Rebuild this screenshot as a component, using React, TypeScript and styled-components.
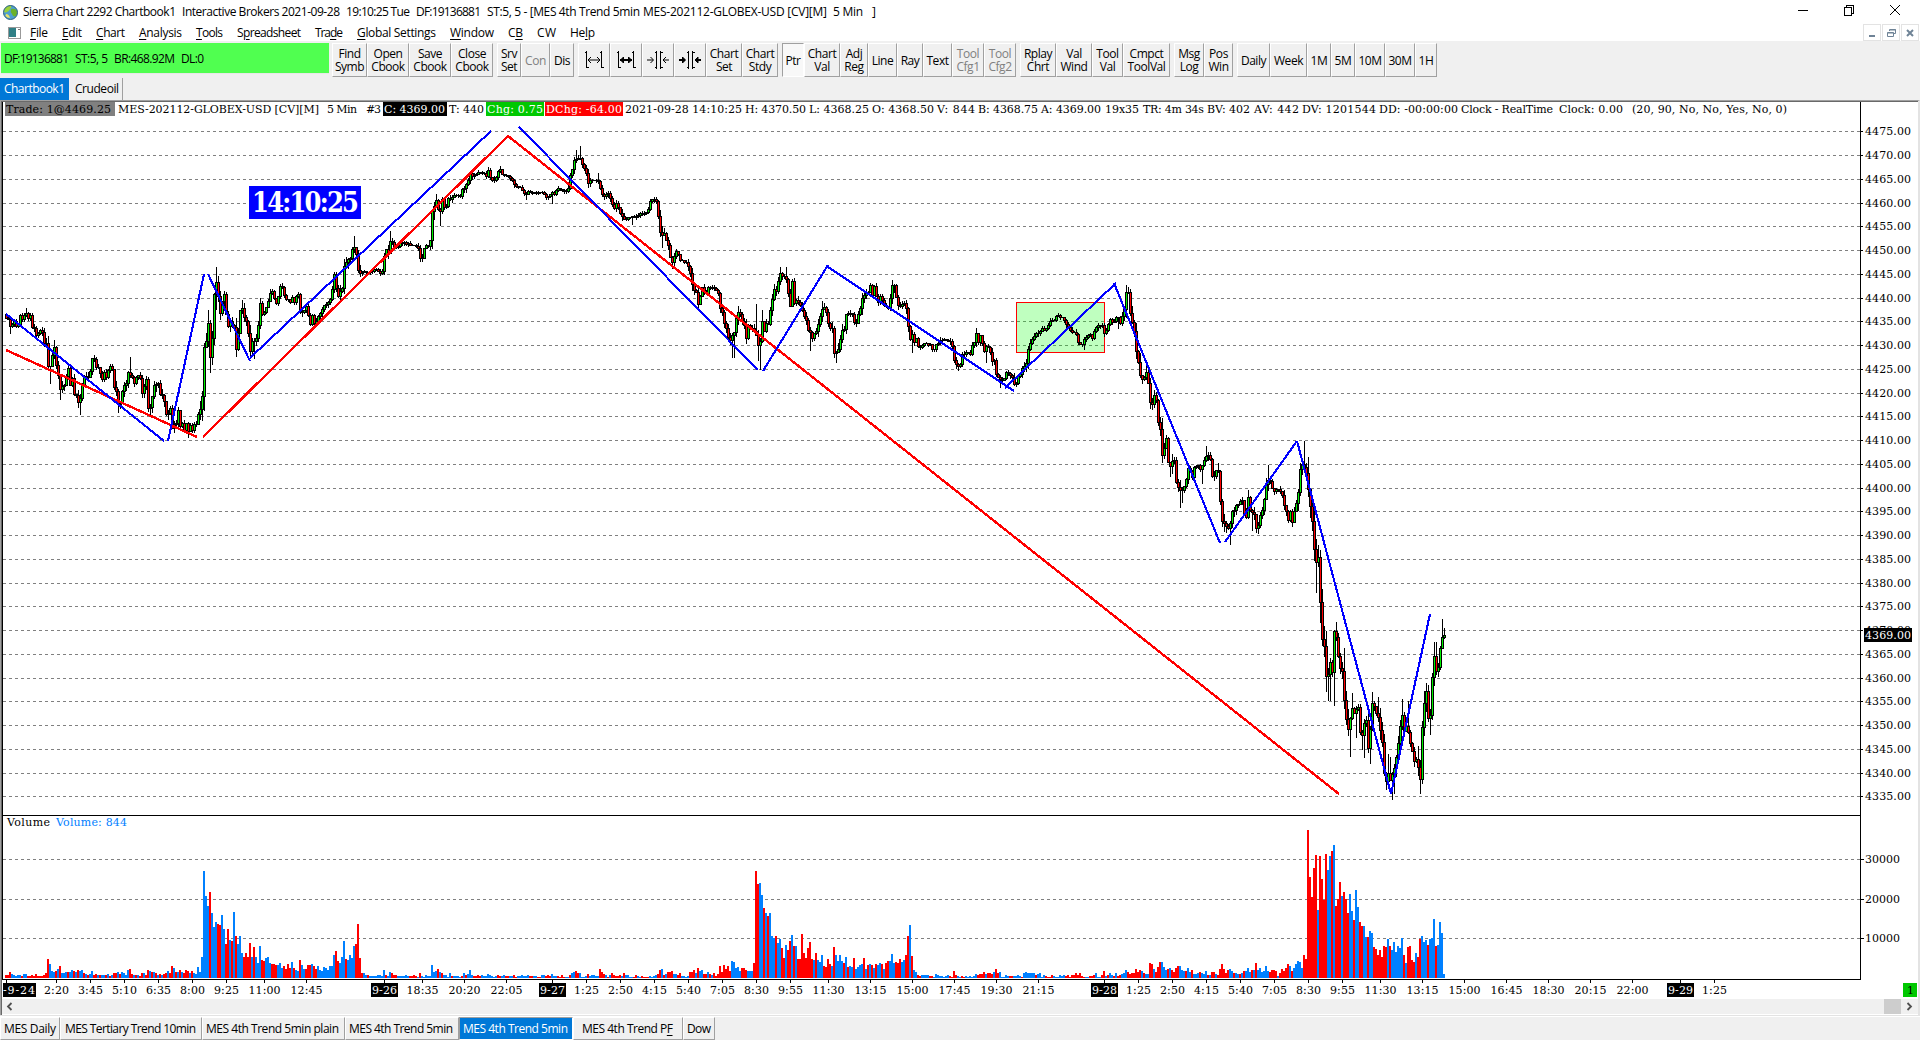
import React, { useLayoutEffect, useRef, useState } from 'react';
import styled, { createGlobalStyle, css } from 'styled-components';

const UI_FONT = '"Open Sans", "Noto Sans", sans-serif';
const CHART_FONT = '"DejaVu Serif", serif';
const CLOCK_FONT = '"DejaVu Serif Condensed", "DejaVu Serif", serif';

const GlobalStyle = createGlobalStyle`
  html, body { margin: 0; padding: 0; }
  body { background: #fff; overflow: hidden; }
  * { box-sizing: border-box; }
`;

/* ---------- text runs ---------- */

const RunText = styled.span<{ $width: number; $gap: number }>`
  display: block;
  flex: none;
  width: ${(p) => p.$width}px;
  margin-left: ${(p) => p.$gap}px;
  white-space: pre;
  overflow: visible;
`;

const Accel = styled.span`
  text-decoration: underline;
  text-underline-offset: 2px;
`;

type RunProps = { text: string; width: number; gap?: number; accel?: number };

/* A label that spreads its letters over a given width. */
function Run({ text, width, gap = 0, accel = -1 }: RunProps) {
  const ref = useRef<HTMLSpanElement>(null);
  const [spacing, setSpacing] = useState(0);
  useLayoutEffect(() => {
    if (!ref.current) return;
    const natural = ref.current.getBoundingClientRect().width - spacing * text.length;
    setSpacing((width - natural) / Math.max(1, text.length - 1));
  }, [text, width]);
  return (
    <RunText $width={width} $gap={gap}>
      <span ref={ref} style={{ letterSpacing: spacing }}>
        {accel >= 0 ? (
          <>
            {text.slice(0, accel)}
            <Accel>{text[accel]}</Accel>
            {text.slice(accel + 1)}
          </>
        ) : (
          text
        )}
      </span>
    </RunText>
  );
}

type Item = [string, number, number, number?];

function Runs({ items, from = 0 }: { items: Item[]; from?: number }) {
  return (
    <>
      {items.map(([text, start, end, accel], i) => (
        <Run
          key={i}
          text={text}
          width={end - start}
          gap={start - (i ? items[i - 1][2] : from)}
          accel={accel}
        />
      ))}
    </>
  );
}

/* ---------- window chrome ---------- */

const Frame = styled.div`
  width: 1920px;
  height: 1040px;
  display: flex;
  flex-direction: column;
  background: #f0f0f0;
  color: #000;
  font: 12px/16px ${UI_FONT};
  overflow: hidden;
`;

const TitleBar = styled.div`
  height: 24px;
  flex: none;
  display: flex;
  align-items: center;
  background: #fff;
  padding-left: 3px;
`;

const WindowButtons = styled.div`
  margin-left: auto;
  align-self: flex-start;
  height: 20px;
  display: flex;
  align-items: center;
  gap: 34px;
  padding-right: 19px;
`;

const MenuBar = styled.div`
  height: 17px;
  flex: none;
  display: flex;
  align-items: center;
  background: #fff;
  padding-left: 8px;
`;

const MdiButtons = styled.div`
  margin-left: auto;
  display: flex;
  gap: 1px;
  padding-right: 1px;
`;

const MdiButton = styled.div`
  width: 18px;
  height: 17px;
  border: 1px solid #e3e3e3;
  display: flex;
  align-items: center;
  justify-content: center;
  background: #fff;
`;

const ToolBar = styled.div`
  height: 36px;
  flex: none;
  display: flex;
  align-items: flex-start;
  padding: 2px 0 0 1px;
`;

const Status = styled.div`
  width: 328px;
  height: 31px;
  display: flex;
  align-items: center;
  background: #50ff50;
  padding: 1px 0 0 3px;
  border-bottom: 1px solid #e8e8e8;
  margin-right: 3px;
`;

const Group = styled.div`
  display: flex;
  margin-right: 4px;
`;

const ToolButton = styled.div<{ $w: number; $off?: boolean; $down?: boolean }>`
  width: ${(p) => p.$w}px;
  height: 34px;
  display: flex;
  align-items: center;
  justify-content: center;
  text-align: center;
  white-space: pre;
  line-height: 13px;
  letter-spacing: -0.45px;
  color: ${(p) => (p.$off ? '#808080' : '#000')};
  border: 1px solid;
  border-color: #fff #a0a0a0 #a0a0a0 #fff;
  ${(p) =>
    p.$down &&
    css`
      background: #f8f8f8;
      border-color: #a0a0a0 #fff #fff #a0a0a0;
    `}
`;

const BookTabs = styled.div`
  height: 23px;
  flex: none;
  display: flex;
`;

const BookTab = styled.div<{ $w: number; $active?: boolean }>`
  width: ${(p) => p.$w}px;
  height: 22px;
  margin-top: 1px;
  padding-left: ${(p) => (p.$active ? 4 : 6)}px;
  display: flex;
  align-items: center;
  background: ${(p) => (p.$active ? '#0078d7' : '#f0f0f0')};
  color: ${(p) => (p.$active ? '#fff' : '#000')};
  border-right: ${(p) => (p.$active ? 'none' : '1px solid #a0a0a0')};
`;

/* ---------- chart window ---------- */

const ChartWindow = styled.div`
  height: 915px;
  flex: none;
  background: #fff;
  border-top: 1px solid #a0a0a0;
  border-left: 1px solid #a0a0a0;
  border-right: 2px solid #e3e3e3;
`;

const ChartInner = styled.div`
  height: 914px;
  border-top: 1px solid #696969;
  border-left: 1px solid #696969;
  display: flex;
  flex-direction: column;
  position: relative;
`;

const QuoteLine = styled.div`
  position: absolute;
  left: 0;
  top: 0;
  height: 14px;
  display: flex;
  font: 11px/15px ${CHART_FONT};
  padding-left: 3px;
`;

const Chip = styled.div<{ $bg: string; $fg: string; $w: number; $gap: number; $pad: number }>`
  flex: none;
  width: ${(p) => p.$w}px;
  margin-left: ${(p) => p.$gap}px;
  padding-left: ${(p) => p.$pad}px;
  background: ${(p) => p.$bg};
  color: ${(p) => p.$fg};
  height: 14px;
`;

const Plot = styled.svg`
  display: block;
  flex: none;
  width: 1916px;
  height: 897px;
  font: 11px ${CHART_FONT};
`;

const VolumeLegend = styled.div`
  position: absolute;
  left: 0;
  top: 714px;
  height: 14px;
  display: flex;
  font: 11px/14px ${CHART_FONT};
`;

const Blue = styled.div`
  color: #0080ff;
  display: flex;
`;

const Clock = styled.div`
  position: absolute;
  left: 247px;
  top: 84px;
  width: 112px;
  height: 33px;
  display: flex;
  background: #00f;
  color: #fff;
  font: bold 27px/34px ${CLOCK_FONT};
  padding-left: 3px;
`;

const ScrollBar = styled.div`
  height: 15px;
  flex: none;
  display: flex;
  align-items: center;
  background: #f0f0f0;
  padding: 0 4px 0 3px;
`;

const Thumb = styled.div`
  width: 17px;
  height: 15px;
  margin: 0 4px 0 auto;
  background: #cdcdcd;
`;

const SheetTabs = styled.div`
  height: 25px;
  flex: none;
  display: flex;
  border-top: 1px solid #e3e3e3;
  padding-top: 1px;
  box-shadow: inset 0 1px 0 #fff;
`;

const SheetTab = styled.div<{ $w: number; $pad: number; $active?: boolean }>`
  width: ${(p) => p.$w}px;
  height: 23px;
  padding-left: ${(p) => p.$pad}px;
  display: flex;
  align-items: center;
  border: 1px solid;
  border-color: #fff #a0a0a0 #a0a0a0 #fff;
  ${(p) =>
    p.$active &&
    css`
      background: #0078d7;
      color: #fff;
      border-color: #a0a0a0 #fff #fff #a0a0a0;
    `}
`;

/* ---------- data ---------- */

/* Closing positions, as x,y pairs in thirds of a pixel from each block's origin. */
const BLOCKS: { ox: number; oy: number; closes: string; wicks: string }[] = [
  {
    ox: 0,
    oy: 120,
    closes:
      '20,590 26,600 32,620 38,612 44,605 50,618 56,612 62,582 68,600 74,585 80,578 86,598 92,580 98,620 104,622 110,650 116,640 122,632 128,640 134,668 140,672 146,750 152,735 158,700 164,680 170,740 176,768 182,810 188,800 194,790 200,765 206,742 212,795 218,772 224,820 230,825 236,845 242,835 248,790 254,760 260,772 266,768 272,748 278,710 284,715 290,738 296,740 302,755 308,778 314,750 320,778 326,750 332,735 338,745 344,810 350,815 356,855 362,845 368,810 374,798 380,785 386,750 392,768 398,775 404,790 410,765 416,765 422,778 428,815 434,790 440,778 446,878 452,865 458,820 464,788 470,790 476,790 482,825 488,825 494,850 500,882 506,880 512,860 518,930 524,910 530,910 536,860 542,925 548,905 554,930 560,910 566,935 572,912 578,930 584,912 590,910 596,885 602,865 608,820 614,670 620,660 626,598 632,728 638,640 644,510 650,480 656,530 662,580 668,545 674,518 680,590 686,618 692,600 698,618 704,620 710,685 716,640 722,567 728,567 734,590 740,605 746,640 752,695 758,660 764,662 770,655 776,615 782,550 788,578 794,575 800,560 806,540 812,520 818,515 824,535 830,555 836,525 842,500 848,498 854,525 860,540 866,535 872,552 878,530 884,545 890,525 896,522 902,575 908,578 914,570 920,555 926,592 932,620 938,580 944,605 950,605 956,585 962,578 974,555 986,545 992,540 998,505 1004,460 1010,510 1016,528 1022,505 1028,500 1034,430 1040,425 1046,420 1052,415 1058,385 1064,382 1070,410 1076,458 1082,458 1094,455 1106,455 1118,450 1130,448 1142,458 1148,452 1154,405 1160,388 1166,400 1172,355 1178,370 1184,385 1190,382 1196,375 1202,370 1214,366 1226,372 1238,374 1250,380 1256,385 1262,415 1268,410 1274,378 1286,375 1292,360 1298,270 1304,262 1310,235 1316,272 1322,272 1328,240 1334,260 1340,255 1346,235 1358,230 1370,222 1382,228 1388,205 1400,195 1406,180 1412,157 1418,170 1424,160 1436,157 1448,157 1460,168 1466,150 1472,175 1480,178 1487,178 1494,152',
    wicks:
      '32,640 152,790 182,838 242,882 392,712 566,952 650,462 632,755 626,570 710,707 764,715 1064,348 1322,314 1172,333 80,563 1310,222',
  },
  {
    ox: 450,
    oy: 120,
    closes:
      '152,150 158,160 170,165 182,175 190,182 196,195 206,198 212,198 218,212 230,220 236,214 248,218 262,217 276,218 284,225 294,232 300,220 306,215 312,225 318,212 324,205 336,205 348,212 354,210 360,172 366,148 372,120 380,115 386,118 392,112 398,132 404,150 410,158 416,188 422,180 434,180 446,182 452,212 460,228 466,228 472,218 480,225 486,245 494,262 500,250 506,260 514,285 520,290 526,300 532,290 540,292 552,290 564,285 572,280 580,285 590,275 596,262 602,242 608,234 614,238 620,245 626,292 632,342 638,345 644,338 650,362 656,380 662,412 668,425 674,405 680,390 686,400 692,420 700,420 708,425 714,435 720,450 726,485 732,510 738,495 744,555 750,545 756,500 762,505 768,522 776,502 784,502 792,500 800,508 806,520 812,570 818,575 824,610 830,630 836,650 842,660 848,645 854,630 860,590 866,575 872,580 878,600 884,620 890,650 896,612 902,625 908,620 914,632 920,645 926,680 932,660 938,603 944,640 950,610 956,615 962,560 968,530 974,510 980,515 986,480 992,460 1000,470 1010,475 1016,525 1022,560 1028,475 1034,550 1040,535 1046,545 1054,560 1060,580 1068,592 1076,630 1082,638 1088,658 1094,630 1100,635 1106,610 1112,590 1118,563 1124,565 1130,580 1136,618 1142,630 1148,625 1154,700 1160,695 1166,690 1172,655 1178,630 1184,625 1190,578 1198,575 1206,578 1212,600 1218,612 1226,575 1234,550 1240,530 1248,520 1256,515 1262,490 1268,522 1274,500 1282,535 1288,550 1294,520 1300,550 1310,560 1318,570 1326,492 1334,495 1340,530 1346,555 1354,560 1362,545 1368,555 1374,605 1380,660 1386,640 1392,670 1398,645 1404,675 1412,680 1420,672 1430,670 1440,672 1450,688 1460,672 1470,665 1480,655 1490,665',
    wicks:
      '230,238 308,248 380,90 392,78 548,312 848,712 854,710 920,552 926,720 932,747 938,570 1010,442 992,442 1082,690 1160,725 1118,543 446,160 500,240 638,382 1386,695',
  },
  {
    ox: 900,
    oy: 220,
    closes:
      '152,365 158,380 164,425 170,430 176,438 182,430 188,405 198,398 206,398 212,402 218,378 224,370 230,340 236,365 242,345 248,372 254,395 260,375 266,380 272,395 278,420 284,418 290,465 296,475 302,480 310,480 316,475 322,452 330,465 338,472 344,490 350,492 356,470 362,462 370,435 378,440 386,378 392,372 400,355 406,335 414,340 420,340 428,320 436,330 444,325 448,305 456,300 464,300 470,285 480,290 488,292 496,305 504,315 512,335 520,335 528,335 536,370 548,375 556,352 564,342 572,342 580,355 586,325 594,312 602,315 608,312 616,348 622,318 632,298 640,308 648,290 656,290 664,315 670,275 676,265 680,212 686,215 692,280 698,310 704,330 710,395 716,430 722,465 728,480 734,470 740,455 746,490 752,550 758,552 764,525 770,545 776,612 782,628 788,710 794,680 800,655 806,730 812,740 818,715 824,720 830,788 836,805 842,812 850,805 858,790 866,740 872,755 878,768 884,740 892,735 898,735 904,755 910,725 918,705 926,705 932,715 938,770 944,765 950,752 956,755 962,855 968,905 976,912 984,925 990,912 998,870 1004,870 1010,850 1018,850 1026,830 1034,880 1040,895 1046,830 1052,870 1058,875 1066,885 1072,950 1078,885 1084,890 1090,855 1096,820 1102,780 1110,780 1116,800 1126,812 1136,802 1144,820 1152,845 1160,880 1166,905 1172,875 1178,905 1184,875 1190,840 1196,820 1202,740 1210,730 1216,745 1222,765 1228,835 1234,880 1240,925 1245,1015',
    wicks:
      '302,500 680,205 842,860 848,845 920,678 990,973 1106,735 1214,663 1226,712 230,328 260,425 554,388 656,325 740,425 1058,930 1046,810 812,768 908,788',
  },
  {
    ox: 1200,
    oy: 420,
    closes:
      '349,432 355,405 361,530 367,650 373,675 379,765 385,768 391,720 397,765 403,635 409,650 415,700 421,745 427,745 433,830 439,895 445,925 451,902 457,865 463,880 469,865 475,857 481,935 487,948 493,912 499,895 505,985 511,930 517,850 523,860 529,875 535,890 541,930 547,960 553,1055 559,1080 565,1055 571,1078 577,1066 583,1050 589,1020 595,980 601,920 607,882 613,935 619,920 625,935 631,960 637,993 643,1022 649,1018 655,1035 661,1088 667,922 673,848 679,808 685,893 691,893 697,778 703,708 709,750 715,748 721,692 727,655 733,648',
    wicks:
      '350,517 356,375 362,607 386,840 392,840 404,855 410,605 434,683 452,1007 458,818 488,988 494,1010 512,1028 518,816 536,832 566,1003 572,1012 578,1136 584,1120 608,838 626,843 656,978 662,1120 692,943 704,667 710,667 728,597 734,625 470,952 380,632',
  },
];

const COUNT = 720;

const noise = (i: number, k: number) => {
  const v = Math.sin(i * 12.9898 + k * 78.233) * 43758.5453;
  return v - Math.floor(v);
};

const pairs = (s: string) => s.split(' ').map((p) => p.split(',').map(Number));

function buildCandles() {
  const pts: number[][] = [];
  const spikes: Record<number, number[]> = {};
  BLOCKS.forEach(({ ox, oy, closes, wicks }) => {
    pairs(closes).forEach(([x, y]) => pts.push([ox + x / 3, oy + y / 3]));
    pairs(wicks).forEach(([x, y]) => {
      const i = Math.round((ox + x / 3 - 6.5) / 2);
      (spikes[i] = spikes[i] || []).push(oy + y / 3);
    });
  });
  const closes: number[] = [];
  let k = 0;
  for (let i = 0; i < COUNT; i++) {
    const x = 6.5 + 2 * i;
    while (k < pts.length - 2 && pts[k + 1][0] < x) k++;
    const [x0, y0] = pts[k];
    const [x1, y1] = pts[k + 1];
    const t = Math.max(0, Math.min(1, (x - x0) / (x1 - x0 || 1)));
    const slope = Math.abs(y1 - y0);
    const jitter = (noise(i, 9) - 0.5) * Math.min(4, 1.6 + slope * 0.25);
    closes.push(Math.round(y0 + (y1 - y0) * t + jitter));
  }
  let black = '';
  let green = '';
  let red = '';
  closes.forEach((c, i) => {
    const x = 6 + 2 * i;
    const o = i ? closes[i - 1] : c - 4;
    const top = Math.min(o, c);
    const bottom = Math.max(o, c);
    const swing =
      1.4 + Math.abs(c - (closes[i - 3] ?? c)) * 0.16 + Math.abs(c - (closes[i + 2] ?? c)) * 0.1;
    let high = top - Math.round(noise(i, 1) * swing);
    let low = bottom + Math.round(noise(i, 2) * swing);
    (spikes[i] || []).forEach((y) => {
      if (y < (top + bottom) / 2) high = Math.min(high, Math.round(y));
      else low = Math.max(low, Math.round(y));
    });
    const h = bottom - top + 1;
    black += `M${x} ${high}h1v${low - high + 1}h-1z`;
    black += `M${x - 1} ${top}h3v${h}h-3z`;
    if (h > 2) {
      const body = `M${x} ${top + 1}h1v${h - 2}h-1z`;
      if (c < o) green += body;
      else red += body;
    }
  });
  return { black, green, red };
}

/* Volume bars: start index, then height and colour letter (r = down, b = up). */
const VOLUME_RUNS: [number, string][] = [
  [0, '3r 3r 6r 4b 3b 2b 3b 3b 2r 4b 4b 2r 2r 3r 2r 4r 2r 2r 2r 3r 5r 19r 14b 7b 6b 7r 9b 12r 5b 5b 6b 6r 6b 8b 7r 6b 8r 7b 8b 5r 4b 3r 4b 7b 3r 4r 3b 3r 3b 3b 3r 4b 2r 3b 5r 5r 6b 4r 6b 5b 3b 8b 9r 4r 3b 3r 3b 2r 5r 5b 3r 8r 7b 6r 6b 5r 3b 4r 3b 4r 5r 7b 5r 12r 10b 6r 6b 8r 6b 5r 8r 7r 5b 7r 5b 4b 11b 6b 21b'],
  [98, '21b 107b 82b 72b 86r 65b 51b 56b 54r 53r 63b 49b 34r 49r 38b 37r 66b 42r 34b 42b 25b 21r 25r 21r 35r 21b 31r 21b 15b 32b 18r 17r 20b 21b 15b 14r 14r 13r 13b 15b 10b 12r 9r 14r 10r 16b 10r 8b 7b 18r 13b 9b 9r 13r 13r 14b 12r 9r 12b 8b 7b 11b 10b 8b 12b 12b 23b 27r 17r 15b 21b 37b 19r 18b 23b 20b 32b 34r 54r 20r 5r 5b 3b 3r'],
  [189, '8b 3r 2b 6b 5r 3r 3r'],
  [207, '5r'],
  [213, '13b 6b 7b 9r 6b 5r 3b'],
  [222, '5b'], [229, '5b 3r 4b 8b 3b'], [241, '4b'], [273, '4b'],
  [283, '5b 6b 7r 5r 5b'], [291, '4r'], [297, '9r 6r 4r 3b'], [303, '5r'], [309, '5r'],
  [326, '4r 8r 9b 3r 4b 6r 6r 7r 4b 4b 3r 5r'],
  [342, '6r 6r 8r 5b 10r 7b 8b 4r 4r 6b 4r 3b 5r 2r 4r 12r 6r 13r 9r 12r 7r 17b 16b 10b 11b 7b 10r 10r 8r 7b 7b 7b 15r'],
  [375, '107r 94r 95b 83b 70r 65b 62r 65b 42b 40b 42r 35b 39b 30r 20r 33b 28r 37r 43b 32r 32b 19r 19r 44r 25r 20r 30r 36r 19r 18b 25r 18b 16b 23b 12r 11r 19r 14r 12b 31r 23b 17b 23b 17b 15r 21b 11r 12b 11b 20r 9b 11b 13b 14b 20r 9b 13r 14b 13r 10b 14r 13b 15b 14r 9b 15r 17r 17b 24b 15b 16r 15r 19r 16b 18b 23r 42r 53b 22r 8b 6b 3r'],
  [465, '4b 3b'], [474, '7r 3r'], [485, '4b 3r 4r 4r 6r 4b 5r 5r 4r 6b 9r 5r 6b'],
  [509, '5b 6b 5b 5b 5b 5b 3r 4b 5b'], [535, '5r 3r 5r'], [545, '5b'], [549, '7r 2b 3r 5b 3b 2r 5b 2r 3r 4b 5b 8b 6r 4r 5r 5r 9r 6r 8r 7b 5r 4b 4b 15r 14r 9b 6r 11r 16r 16b 11b 8b 9r 10b 8r 6r 10r 12r 12b 8b 7b 7r 10b 6b 8r 4b 4b 5b 6r 5b 4b 7b 3r 3b 6r 6r 4b 3r 9r 14r 9r 5r 8r 9b 7b 5r 5b 4b 4r 5b 7r 7b 10b 6b 8r 8b 15r 8b 10b 6b 7b 12b 7b 6r 8r 8r 7r'],
  [637, '5r 9r 7r 10r 14r 12b 7r 10b 14b 17b 16b 10b 23r 19r'],
  [651, '148r 101r 81r 110r 123r 68b 122r 99r 78r 124r 108b 122b 127r 133b 72r 79r 96r 82b 86r 79r 65r 84b 67b 58r 88b 71b 56r 52r 52b 41b 41r 47b 45b 31r 29r 23r 28r 21r 32r 31r 39b 32r 28b 36b 26b 32b 30b 40b 23r 15b 31r 32r 18r 16r 25b 21r 39r 42b 36b 38b 33r 39b 40b 59b 32r 33b 56b 45b 4b'],
];

function buildVolume() {
  const h: number[] = [];
  const up: boolean[] = [];
  for (let i = 0; i < COUNT; i++) {
    h.push(noise(i, 5) > 0.75 ? 3 : noise(i, 5) < 0.25 ? 1 : 2);
    up.push(noise(Math.floor(i / 2), 6) > 0.5);
  }
  VOLUME_RUNS.forEach(([start, run]) =>
    run.split(' ').forEach((t, n) => {
      h[start + n] = parseInt(t, 10);
      up[start + n] = t.endsWith('b');
    }),
  );
  let blue = '';
  let red = '';
  for (let i = 0; i < COUNT; i++) {
    const d = `M${5 + 2 * i} ${978 - h[i]}h2v${h[i]}h-2z`;
    if (up[i]) blue += d;
    else red += d;
  }
  return { blue, red };
}

const candles = buildCandles();
const volume = buildVolume();

const PRICES = Array.from({ length: 29 }, (_, i) => ({
  y: 131 + 95 * Math.floor(i / 4) + 24 * (i % 4),
  label: (4475 - 5 * i).toFixed(2),
}));

const VOLUMES = [
  { y: 859, label: '30000' },
  { y: 899, label: '20000' },
  { y: 938, label: '10000' },
];

const BLUE_LINES = [
  [6, 314, 164, 441], [168, 441, 204, 274], [208, 274, 250, 361], [250, 358, 491, 131],
  [519, 127, 758, 370], [763, 371, 828, 265], [828, 267, 1014, 391], [1005, 388, 1116, 283],
  [1114, 283, 1220, 543], [1225, 542, 1297, 441], [1297, 441, 1391, 794], [1391, 794, 1430, 614],
];

const RED_LINES = [[6, 350, 197, 437], [203, 437, 508, 136], [508, 136, 1339, 794]];

const TIMES: [string, number][] = [
  ['2:20', 56], ['3:45', 90], ['5:10', 124], ['6:35', 158], ['8:00', 192], ['9:25', 226],
  ['11:00', 264], ['12:45', 306], ['9-26', 384], ['18:35', 422], ['20:20', 464], ['22:05', 506],
  ['9-27', 552], ['1:25', 586], ['2:50', 620], ['4:15', 654], ['5:40', 688], ['7:05', 722],
  ['8:30', 756], ['9:55', 790], ['11:30', 828], ['13:15', 870], ['15:00', 912], ['17:45', 954],
  ['19:30', 996], ['21:15', 1038], ['9-28', 1104], ['1:25', 1138], ['2:50', 1172], ['4:15', 1206],
  ['5:40', 1240], ['7:05', 1274], ['8:30', 1308], ['9:55', 1342], ['11:30', 1380],
  ['13:15', 1422], ['15:00', 1464], ['16:45', 1506], ['18:30', 1548], ['20:15', 1590],
  ['22:00', 1632], ['9-29', 1680], ['1:25', 1714],
];

/* ---------- drawings ---------- */

function ChartPlot() {
  return (
    <Plot viewBox="2 102 1916 897" shapeRendering="crispEdges">
      <g stroke="#808080" strokeDasharray="3 3">
        {[...PRICES, ...VOLUMES].map(({ y }) => (
          <line key={y} x1="3" x2="1860" y1={y + 0.5} y2={y + 0.5} />
        ))}
      </g>
      <rect x="1016.5" y="302.5" width="88" height="50" fill="rgba(0,255,0,.25)" stroke="#f00" />
      <path d={candles.black} fill="#000" />
      <path d={candles.green} fill="#00f000" />
      <path d={candles.red} fill="#f00" />
      <path d={volume.blue} fill="#0080ff" />
      <path d={volume.red} fill="#f00" />
      <g fill="none">
        {RED_LINES.map(([x1, y1, x2, y2], i) => (
          <line key={i} x1={x1} y1={y1} x2={x2} y2={y2} stroke="#f00" strokeWidth="2.4" />
        ))}
        {BLUE_LINES.map(([x1, y1, x2, y2], i) => (
          <line key={i} x1={x1} y1={y1} x2={x2} y2={y2} stroke="#00f" strokeWidth="2.1" />
        ))}
      </g>
      <path d="M2.5 102V979.5H1860.5V102M2 815.5H1860" fill="none" stroke="#000" />
      {PRICES.map(({ y, label }) => (
        <g key={y}>
          <path d={`M1861 ${y + 0.5}h2`} stroke="#000" />
          <text x="1865" y={y + 4} textLength="46">{label}</text>
        </g>
      ))}
      {VOLUMES.map(({ y, label }) => (
        <g key={y}>
          <path d={`M1861 ${y + 0.5}h3`} stroke="#000" />
          <text x="1865" y={y + 4} textLength="35">{label}</text>
        </g>
      ))}
      <rect x="1864" y="628" width="48" height="14" />
      <text x="1865" y="639" fill="#fff" textLength="46">4369.00</text>
      <path d="M6.5 980v3" stroke="#000" />
      <rect x="3" y="983" width="33" height="14" />
      <text x="3" y="994" fill="#fff" textLength="32">-9-24</text>
      {TIMES.map(([label, x]) => {
        const date = label.includes('-');
        const w = label.length === 5 ? 32 : 25;
        return (
          <g key={x}>
            <path d={`M${x + 0.5} 980v3`} stroke="#000" />
            {date && <rect x={x - 13} y="983" width="27" height="14" />}
            <text
              x={x + 0.5 - w / 2}
              y="994"
              textLength={w}
              fill={date ? '#fff' : '#000'}
            >
              {label}
            </text>
          </g>
        );
      })}
      <rect x="1903" y="983" width="14" height="14" fill="#00c800" />
      <text x="1907" y="994">1</text>
    </Plot>
  );
}

function Globe() {
  return (
    <svg width="15" height="15" viewBox="0 0 15 15">
      <circle cx="7.5" cy="7.5" r="7" fill="#4f9fd0" />
      <path d="M2 3q3-3 6-2.500q1 2-1 3.500q-1 3-4 3.500q-2 0-2-1z" fill="#9bd13c" />
      <path d="M8 4q3-1 5.500 1q1.500 3-.5 6q-3 1.500-4-2q-2-2-1-5z" fill="#6ab12a" />
      <path d="M3 9q3 0 4 4q-3 0-4.500-2z" fill="#e9e36a" />
      <circle cx="7.500" cy="7.500" r="7" fill="none" stroke="#2a5f80" />
    </svg>
  );
}

function MdiIcon() {
  return (
    <svg width="14" height="12" viewBox="0 0 14 12">
      <rect x=".5" y=".5" width="12" height="11" fill="#fff" stroke="#999" />
      <rect x="1" y="1" width="7" height="9" fill="#2f7f86" />
      <path d="M10 2.500h2" stroke="#777" />
    </svg>
  );
}

function SpacingIcon({ inward, bold }: { inward?: boolean; bold?: boolean }) {
  const w = bold ? 2 : 1;
  return inward ? (
    <svg width="22" height="20" viewBox="0 0 22 20" fill="none" stroke="#000">
      <path
        d="M9.500 1v18M13.500 1v18M7.500 2.500h2M13.500 2.500h2M7.500 17.500h2M13.500 17.500h2"
        shapeRendering="crispEdges"
      />
      <path d="M0 10h6M16 10h6" strokeWidth={w} />
      {bold ? (
        <path d="M3.500 7l3 3-3 3zM19 7l-3 3 3 3z" fill="#000" />
      ) : (
        <path d="M3.500 7l3 3-3 3M19 7l-3 3 3 3" />
      )}
    </svg>
  ) : (
    <svg width="20" height="20" viewBox="0 0 20 20" fill="none" stroke="#000">
      <path
        d="M2.500 1v17M17.500 1v17M.5 2.500h2M15.500 2.500h2M2.500 17.500h2M17.500 17.500h2"
        shapeRendering="crispEdges"
      />
      <path d="M4 10h12" strokeWidth={w} />
      {bold ? (
        <path d="M7.500 7l-3 3 3 3zM12.500 7l3 3-3 3z" fill="#000" />
      ) : (
        <path d="M7 7l-3 3 3 3M13 7l3 3-3 3" />
      )}
    </svg>
  );
}

type Btn = { t?: string; w: number; off?: boolean; down?: boolean; icon?: [boolean, boolean] };

const GROUPS: Btn[][] = [
  [{ t: 'Find\nSymb', w: 35 }, { t: 'Open\nCbook', w: 42 }, { t: 'Save\nCbook', w: 42 }, { t: 'Close\nCbook', w: 42 }],
  [{ t: 'Srv\nSet', w: 24 }, { t: 'Con', w: 29, off: true }, { t: 'Dis', w: 24 }],
  [
    { w: 32, icon: [false, false] }, { w: 32, icon: [false, true] },
    { w: 32, icon: [true, false] }, { w: 32, icon: [true, true] },
    { t: 'Chart\nSet', w: 36 }, { t: 'Chart\nStdy', w: 36 },
  ],
  [
    { t: 'Ptr', w: 22, down: true }, { t: 'Chart\nVal', w: 36 }, { t: 'Adj\nReg', w: 28 },
    { t: 'Line', w: 29 }, { t: 'Ray', w: 26 }, { t: 'Text', w: 29 },
    { t: 'Tool\nCfg1', w: 32, off: true }, { t: 'Tool\nCfg2', w: 32, off: true },
  ],
  [{ t: 'Rplay\nChrt', w: 36 }, { t: 'Val\nWind', w: 36 }, { t: 'Tool\nVal', w: 31 }, { t: 'Cmpct\nToolVal', w: 47 }],
  [{ t: 'Msg\nLog', w: 30 }, { t: 'Pos\nWin', w: 29 }],
  [
    { t: 'Daily', w: 33 }, { t: 'Week', w: 37 }, { t: '1M', w: 24 }, { t: '5M', w: 24 },
    { t: '10M', w: 30 }, { t: '30M', w: 30 }, { t: '1H', w: 22 },
  ],
];

const MENU: Item[] = [
  ['File', 30, 48, 0], ['Edit', 62, 82, 0], ['Chart', 96, 125, 0], ['Analysis', 139, 182, 0],
  ['Tools', 196, 223, 0], ['Spreadsheet', 237, 301, 1], ['Trade', 315, 343, 3],
  ['Global Settings', 357, 436, 0], ['Window', 450, 494, 0], ['CB', 508, 523, 1],
  ['CW', 537, 556], ['Help', 570, 595, 2],
];

const TITLE: Item[] = [
  ['Sierra Chart 2292 Chartbook1', 23, 176],
  ['Interactive Brokers 2021-09-28', 182, 340],
  ['19:10:25 Tue', 346, 410],
  ['DF:19136881', 416, 481],
  ['ST:5, 5 - [MES 4th Trend 5min', 487, 640],
  ['MES-202112-GLOBEX-USD [CV][M]', 643, 827],
  ['5 Min', 833, 863],
  [']', 872, 876],
];

const QUOTES: Item[] = [
  ['2021-09-28 14:10:25', 625, 742], ['H: 4370.50', 745, 806], ['L: 4368.25', 809, 869],
  ['O: 4368.50', 872, 934], ['V: 844', 937, 975], ['B: 4368.75', 978, 1038],
  ['A: 4369.00', 1041, 1101], ['19x35', 1105, 1139], ['TR: 4m 34s', 1143, 1204],
  ['BV: 402', 1207, 1250], ['AV: 442', 1254, 1299], ['DV: 1201544', 1302, 1376],
  ['DD: -00:00:00', 1379, 1458], ['Clock - RealTime', 1461, 1553],
  ['Clock: 0.00', 1559, 1623], ['(20, 90, No, No, Yes, No, 0)', 1632, 1787],
];

const SHEETS: { t: string; w: number; pad: number; tw: number; active?: boolean; accel?: number }[] = [
  { t: 'MES Daily', w: 60, pad: 3, tw: 52 },
  { t: 'MES Tertiary Trend 10min', w: 142, pad: 4, tw: 131 },
  { t: 'MES 4th Trend 5min plain', w: 143, pad: 3, tw: 133 },
  { t: 'MES 4th Trend 5min', w: 114, pad: 3, tw: 104 },
  { t: 'MES 4th Trend 5min', w: 114, pad: 3, tw: 105, active: true },
  { t: 'MES 4th Trend PF', w: 110, pad: 8, tw: 91, accel: 15 },
  { t: 'Dow', w: 32, pad: 3, tw: 24 },
];

export default function App() {
  return (
    <Frame>
      <GlobalStyle />
      <TitleBar>
        <Globe />
        <Runs items={TITLE} from={18} />
        <WindowButtons>
          <svg width="12" height="12" viewBox="0 0 12 12"><path d="M1 6.500h10" stroke="#000" /></svg>
          <svg width="12" height="12" viewBox="0 0 12 12" fill="none" stroke="#000" shapeRendering="crispEdges">
            <path d="M1.500 3.500h7v8h-7zM3.500 3V1.500h7v8H9" />
          </svg>
          <svg width="12" height="12" viewBox="0 0 12 12"><path d="M1 1l10 10M11 1L1 11" stroke="#000" /></svg>
        </WindowButtons>
      </TitleBar>
      <MenuBar>
        <MdiIcon />
        <Runs items={MENU} from={22} />
        <MdiButtons>
          <MdiButton>
            <svg width="8" height="10"><path d="M1 8h6" stroke="#6f8396" strokeWidth="2" /></svg>
          </MdiButton>
          <MdiButton>
            <svg width="9" height="10" fill="none" stroke="#6f8396">
              <path d="M2.500 3V1.500h6v4H7M.5 4.500h6v4h-6zM.5 5h6M3 2h6" />
            </svg>
          </MdiButton>
          <MdiButton>
            <svg width="8" height="8"><path d="M1 1l6 6M7 1L1 7" stroke="#6f8396" strokeWidth="2" /></svg>
          </MdiButton>
        </MdiButtons>
      </MenuBar>
      <ToolBar>
        <Status>
          <Runs items={[['DF:19136881', 4, 69], ['ST:5, 5', 75, 108], ['BR:468.92M', 114, 175], ['DL:0', 181, 204]]} from={4} />
        </Status>
        {GROUPS.map((group, g) => (
          <Group key={g}>
            {group.map((b, i) => (
              <ToolButton key={i} $w={b.w} $off={b.off} $down={b.down}>
                {b.icon ? <SpacingIcon inward={b.icon[0]} bold={b.icon[1]} /> : b.t}
              </ToolButton>
            ))}
          </Group>
        ))}
      </ToolBar>
      <BookTabs>
        <BookTab $w={69} $active>
          <Run text="Chartbook1" width={61} />
        </BookTab>
        <BookTab $w={54}>
          <Run text="Crudeoil" width={44} />
        </BookTab>
      </BookTabs>
      <ChartWindow>
        <ChartInner>
          <ChartPlot />
          <QuoteLine>
            <Chip $bg="#808080" $fg="#000" $w={110} $gap={0} $pad={1}>
              <Run text="Trade: 1@4469.25" width={105} />
            </Chip>
            <Runs items={[['MES-202112-GLOBEX-USD [CV][M]', 118, 319], ['5 Min', 327, 357], ['#3', 366, 381]]} from={115} />
            <Chip $bg="#000" $fg="#fff" $w={64} $gap={2} $pad={1}>
              <Run text="C: 4369.00" width={61} />
            </Chip>
            <Run text="T: 440" width={35} gap={2} />
            <Chip $bg="#00c800" $fg="#fff" $w={58} $gap={2} $pad={1}>
              <Run text="Chg: 0.75" width={56} />
            </Chip>
            <Chip $bg="#f00" $fg="#fff" $w={78} $gap={1} $pad={1}>
              <Run text="DChg: -64.00" width={76} />
            </Chip>
            <Runs items={QUOTES} from={623} />
          </QuoteLine>
          <Clock>
            <Run text="14:10:25" width={107} />
          </Clock>
          <VolumeLegend>
            <Run text="Volume" width={43} gap={5} />
            <Blue>
              <Run text="Volume: 844" width={71} gap={6} />
            </Blue>
          </VolumeLegend>
          <ScrollBar>
            <svg width="9" height="9" viewBox="0 0 9 9"><path d="M6.500 1L3 4.500 6.500 8" fill="none" stroke="#505050" strokeWidth="1.800" /></svg>
            <Thumb />
            <svg width="9" height="9" viewBox="0 0 9 9"><path d="M2.500 1L6 4.500 2.500 8" fill="none" stroke="#505050" strokeWidth="1.800" /></svg>
          </ScrollBar>
        </ChartInner>
      </ChartWindow>
      <SheetTabs>
        {SHEETS.map((s, i) => (
          <SheetTab key={i} $w={s.w} $pad={s.pad} $active={s.active}>
            <Run text={s.t} width={s.tw} accel={s.accel} />
          </SheetTab>
        ))}
      </SheetTabs>
    </Frame>
  );
}
